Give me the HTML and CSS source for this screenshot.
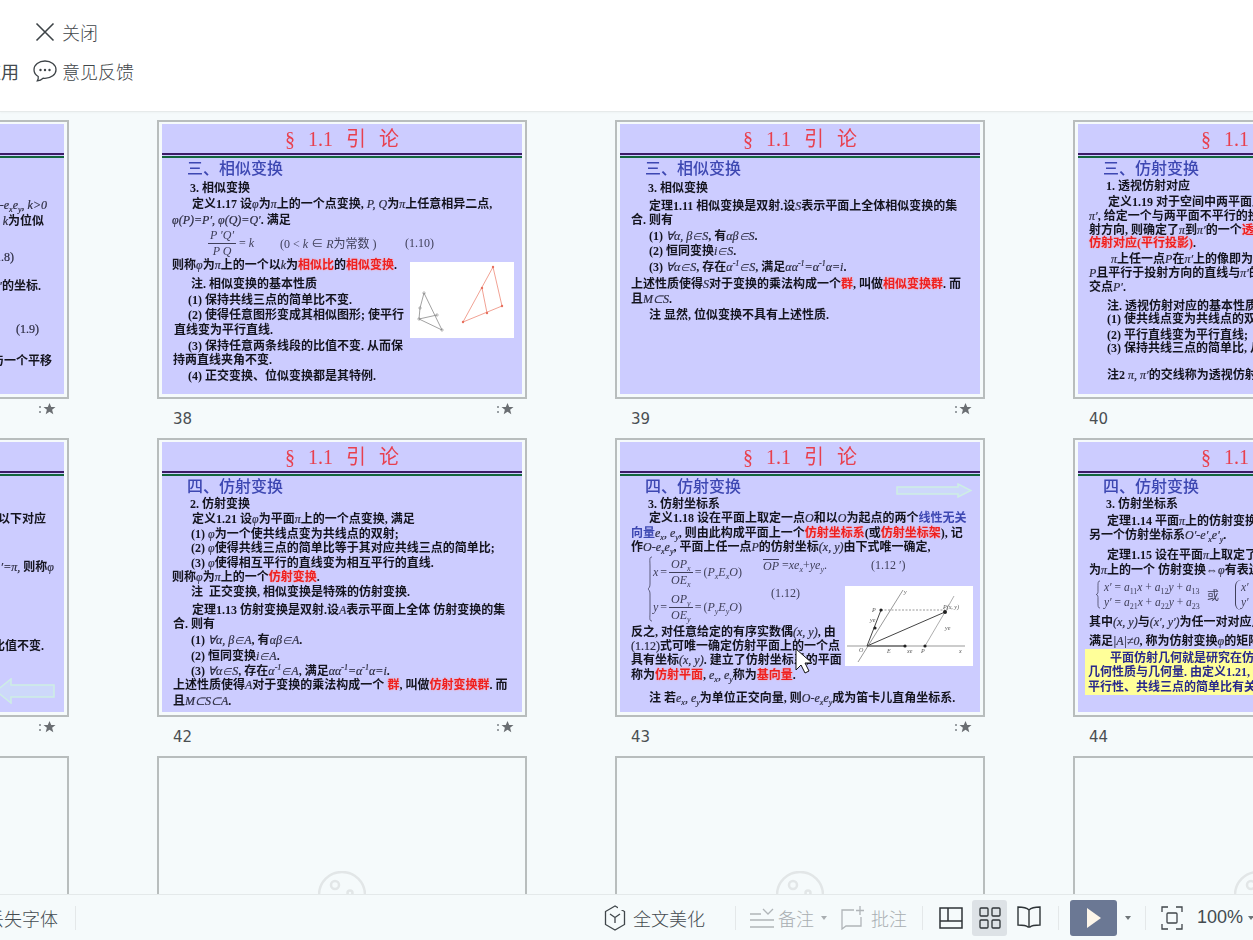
FILE: index.html
```html
<!DOCTYPE html>
<html lang="zh">
<head>
<meta charset="utf-8">
<title>幻灯片浏览</title>
<link rel="stylesheet" href="styles.css">
</head>
<body>
<header class="topbar">
  <div class="toolrow first">
    <span class="cut"></span>
    <svg class="ico-x" viewBox="0 0 20 20"><path d="M1.5 1.5 18.500 18.500M18.500 1.500 1.500 18.500"/></svg>
    <span class="tool-label">关闭</span>
  </div>
  <div class="toolrow second">
    <span class="cut">应用</span>
    <svg class="ico-chat" viewBox="0 0 24 22"><path d="M12 1C5.900 1 1 4.900 1 9.700c0 2.800 1.600 5.200 4.200 6.800.3 1.500-.1 3-.9 4.300 2.300-.2 4.300-1.200 5.800-2.600.6.100 1.300.2 1.900.2 6.100 0 11-3.900 11-8.700S18.100 1 12 1z"/><circle cx="7.500" cy="10" r="1.200"/><circle cx="12" cy="10" r="1.200"/><circle cx="16.500" cy="10" r="1.200"/></svg>
    <span class="tool-label">意见反馈</span>
  </div>
</header>

<main class="sorter">
  <div class="grid">

    <article class="card">
      <div class="frame"><div class="slide">
        <div class="title">§ 1.1 引 论</div><div class="rule"></div>
        <div class="head">三、相似变换</div>
        <div class="line end e17 d38"><i>O-e<sub>x</sub>e<sub>y</sub>, k&gt;0</i></div>
        <div class="line end e20 d16"><i>k</i>为位似</div>
        <div class="line end e50 d36"><span class="n">(1.8)</span></div>
        <div class="line end e23 d29"><i>′</i>的坐标.</div>
        <div class="line end e25 d43"><span class="n">(1.9)</span></div>
        <div class="line end e12 d32">与一个平移</div>
      </div></div>
      <div class="foot"><span class="num">37</span><svg class="star" viewBox="0 0 17 12"><path class="dots" d="M0 3h2v2H0zM0 8h2v2H0z"/><path d="M10.500 0l1.700 4h4.300l-3.400 2.800 1.200 4.400-3.800-2.500-3.800 2.500 1.200-4.400L4.500 4h4.300z"/></svg></div>
    </article>

    <article class="card">
      <div class="frame"><div class="slide">
        <div class="title">§ 1.1 引 论</div><div class="rule"></div>
        <div class="head">三、相似变换</div>
        <div class="line i28 d21">3. 相似变换</div>
        <div class="line i30 d16">定义1.17 设<i>φ</i>为<i>π</i>上的一个点变换, <i>P, Q</i>为<i>π</i>上任意相异二点,</div>
        <div class="line d16"><i>φ(P)=P′, φ(Q)=Q′</i>. 满足</div>
        <div class="formula f38">
          <span class="frac"><span class="over"><i>P ′Q′</i></span><span><i>P Q</i></span></span>
          <span class="eqk">= <i>k</i></span>
          <span class="cond">(0 &lt; <i>k</i> ∈ <i>R</i>为常数 )</span>
          <span class="eqno">(1.10)</span>
        </div>
        <div class="line">则称<i>φ</i>为<i>π</i>上的一个以<i>k</i>为<span class="hl">相似比</span>的<span class="hl">相似变换</span>.</div>
        <div class="line i29 d19">注. 相似变换的基本性质</div>
        <div class="line i26 d16">(1) 保持共线三点的简单比不变.</div>
        <div class="line i26 d15">(2) 使得任意图形变成其相似图形; 使平行</div>
        <div class="line i2 d15">直线变为平行直线.</div>
        <div class="line i26 d16">(3) 保持任意两条线段的比值不变. 从而保</div>
        <div class="line i1 d14">持两直线夹角不变.</div>
        <div class="line i26 d16">(4) 正交变换、位似变换都是其特例.</div>
        <svg class="pic pic38" viewBox="0 0 104 76">
          <g class="gray"><path d="M14 31 32 68 9 57 27 53M14 31 10 46 9 57"/><circle cx="14" cy="31" r="1.200"/><circle cx="10" cy="46" r="1.200"/><circle cx="27" cy="53" r="1.200"/><circle cx="9" cy="57" r="1.200"/><circle cx="32" cy="68" r="1.200"/></g>
          <g class="pink"><path d="M53 60 83 5 92 44ZM72 26 77 51"/><circle cx="83" cy="5" r="1.200"/><circle cx="72" cy="26" r="1.200"/><circle cx="92" cy="44" r="1.200"/><circle cx="77" cy="51" r="1.200"/><circle cx="53" cy="60" r="1.200"/></g>
        </svg>
      </div></div>
      <div class="foot"><span class="num">38</span><svg class="star" viewBox="0 0 17 12"><path class="dots" d="M0 3h2v2H0zM0 8h2v2H0z"/><path d="M10.500 0l1.700 4h4.300l-3.400 2.800 1.200 4.400-3.800-2.500-3.800 2.500 1.200-4.400L4.500 4h4.300z"/></svg></div>
    </article>

    <article class="card">
      <div class="frame"><div class="slide">
        <div class="title">§ 1.1 引 论</div><div class="rule"></div>
        <div class="head">三、相似变换</div>
        <div class="line i28 d21">3. 相似变换</div>
        <div class="line i29 d18">定理1.11 相似变换是双射.设<i>S</i>表示平面上全体相似变换的集</div>
        <div class="line i1 d14">合. 则有</div>
        <div class="line i29 d16">(1) <i>∀α, β∈S</i>, 有<i>αβ∈S</i>.</div>
        <div class="line i29 d15">(2) 恒同变换<i>i∈S</i>.</div>
        <div class="line i29 d16">(3) <i>∀α∈S</i>, 存在<i>α<sup>-1</sup>∈S</i>, 满足<i>αα<sup>-1</sup>=α<sup>-1</sup>α=i</i>.</div>
        <div class="line i1 d17">上述性质使得<i>S</i>对于变换的乘法构成一个<span class="hl">群</span>, 叫做<span class="hl">相似变换群</span>. 而</div>
        <div class="line i1 d15">且<i>M⊂S</i>.</div>
        <div class="line i29 d16">注 显然, 位似变换不具有上述性质.</div>
      </div></div>
      <div class="foot"><span class="num">39</span><svg class="star" viewBox="0 0 17 12"><path class="dots" d="M0 3h2v2H0zM0 8h2v2H0z"/><path d="M10.500 0l1.700 4h4.300l-3.400 2.800 1.200 4.400-3.800-2.500-3.800 2.500 1.200-4.400L4.500 4h4.300z"/></svg></div>
    </article>

    <article class="card">
      <div class="frame"><div class="slide">
        <div class="title">§ 1.1 引 论</div><div class="rule"></div>
        <div class="head">三、仿射变换</div>
        <div class="line i28 d15">1. 透视仿射对应</div>
        <div class="line i30 d16">定义1.19 对于空间中两平面上的点</div>
        <div class="line i1 d14"><i>π′</i>, 给定一个与两平面不平行的投</div>
        <div class="line i1 d14">射方向, 则确定了<i>π</i>到<i>π′</i>的一个<span class="hl">透视</span></div>
        <div class="line i1 d13"><span class="hl">仿射对应(平行投影)</span>.</div>
        <div class="line i33 d16"><i>π</i>上任一点<i>P</i>在<i>π′</i>上的像即为过</div>
        <div class="line i1 d14"><i>P</i>且平行于投射方向的直线与<i>π′</i>的</div>
        <div class="line i1 d14">交点<i>P′</i>.</div>
        <div class="line i29 d19">注. 透视仿射对应的基本性质</div>
        <div class="line i29 d13">(1) 使共线点变为共线点的双射</div>
        <div class="line i29 d16">(2) 平行直线变为平行直线;</div>
        <div class="line i29 d13">(3) 保持共线三点的简单比, 从而</div>
        <div class="line i29 d27">注2 <i>π, π′</i>的交线称为透视仿射</div>
      </div></div>
      <div class="foot"><span class="num">40</span><svg class="star" viewBox="0 0 17 12"><path class="dots" d="M0 3h2v2H0zM0 8h2v2H0z"/><path d="M10.500 0l1.700 4h4.300l-3.400 2.800 1.200 4.400-3.800-2.500-3.800 2.500 1.200-4.400L4.500 4h4.300z"/></svg></div>
    </article>

    <article class="card">
      <div class="frame"><div class="slide">
        <div class="title">§ 1.1 引 论</div><div class="rule"></div>
        <div class="head">四、仿射变换</div>
        <div class="line end e18 d34">以下对应</div>
        <div class="line end e10 d48"><i>′=π,</i> 则称<i>φ</i></div>
        <div class="line end e20 d79">比值不变.</div>
        <svg class="arrow arrow-left" viewBox="0 0 60 26"><path d="M59 7H16V1L1 13l15 12v-6h43z"/></svg>
      </div></div>
      <div class="foot"><span class="num">41</span><svg class="star" viewBox="0 0 17 12"><path class="dots" d="M0 3h2v2H0zM0 8h2v2H0z"/><path d="M10.500 0l1.700 4h4.300l-3.400 2.800 1.200 4.400-3.800-2.500-3.800 2.500 1.200-4.400L4.500 4h4.300z"/></svg></div>
    </article>

    <article class="card">
      <div class="frame"><div class="slide">
        <div class="title">§ 1.1 引 论</div><div class="rule"></div>
        <div class="head">四、仿射变换</div>
        <div class="line i28 d15">2. 仿射变换</div>
        <div class="line i30 d15">定义1.21 设<i>φ</i>为平面<i>π</i>上的一个点变换, 满足</div>
        <div class="line i29 d15">(1) <i>φ</i>为一个使共线点变为共线点的双射;</div>
        <div class="line i29 d14">(2) <i>φ</i>使得共线三点的简单比等于其对应共线三点的简单比;</div>
        <div class="line i29 d15">(3) <i>φ</i>使得相互平行的直线变为相互平行的直线.</div>
        <div class="line d14">则称<i>φ</i>为<i>π</i>上的一个<span class="hl">仿射变换</span>.</div>
        <div class="line i29 d15">注&nbsp; 正交变换, 相似变换是特殊的仿射变换.</div>
        <div class="line i30 d18">定理1.13 仿射变换是双射.设<i>A</i>表示平面上全体 仿射变换的集</div>
        <div class="line i1 d14">合. 则有</div>
        <div class="line i29 d16">(1) <i>∀α, β∈A</i>, 有<i>αβ∈A</i>.</div>
        <div class="line i29 d16">(2) 恒同变换<i>i∈A</i>.</div>
        <div class="line i29 d15">(3) <i>∀α∈S</i>, 存在<i>α<sup>-1</sup>∈A</i>, 满足<i>αα<sup>-1</sup>=α<sup>-1</sup>α=i</i>.</div>
        <div class="line i1 d14">上述性质使得<i>A</i>对于变换的乘法构成一个 <span class="hl">群</span>, 叫做<span class="hl">仿射变换群</span>. 而</div>
        <div class="line i1 d16">且<i>M⊂S⊂A</i>.</div>
      </div></div>
      <div class="foot"><span class="num">42</span><svg class="star" viewBox="0 0 17 12"><path class="dots" d="M0 3h2v2H0zM0 8h2v2H0z"/><path d="M10.500 0l1.700 4h4.300l-3.400 2.800 1.200 4.400-3.800-2.500-3.800 2.500 1.200-4.400L4.500 4h4.300z"/></svg></div>
    </article>

    <article class="card">
      <div class="frame"><div class="slide">
        <div class="title">§ 1.1 引 论</div><div class="rule"></div>
        <div class="head">四、仿射变换</div>
        <div class="line i28 d15">3. 仿射坐标系</div>
        <div class="line i29 d14">定义1.18 设在平面上取定一点<i>O</i>和以<i>O</i>为起点的两个<span class="bl">线性无关</span></div>
        <div class="line i1 d15"><span class="bl">向量</span><i>e<sub>x</sub>, e<sub>y</sub></i>, 则由此构成平面上一个<span class="hl">仿射坐标系</span>(或<span class="hl">仿射坐标架</span>), 记</div>
        <div class="line i1 d14">作<i>O-e<sub>x</sub>e<sub>y</sub></i>, 平面上任一点<i>P</i>的仿射坐标<i>(x, y)</i>由下式唯一确定,</div>
        <div class="eqblock">
          <svg class="brace" viewBox="0 0 6 66"><path d="M5 1C2 1 3 4 3 10v18c0 3-1 4-2 5 1 1 2 2 2 5v18c0 6-1 9 2 9"/></svg>
          <div class="eqs">
            <div class="eq"><i>x</i> = <span class="frac"><span class="over"><i>OP<sub>x</sub></i></span><span><i>OE<sub>x</sub></i></span></span> = <span>(<i>P<sub>x</sub>E<sub>x</sub>O</i>)</span></div>
            <div class="eq"><i>y</i> = <span class="frac"><span class="over"><i>OP<sub>y</sub></i></span><span><i>OE<sub>y</sub></i></span></span> = <span>(<i>P<sub>y</sub>E<sub>y</sub>O</i>)</span></div>
          </div>
          <div class="eqside">
            <div class="eqtop"><span class="vec"><i>OP</i></span>&nbsp;= <i>xe<sub>x</sub></i> + <i>ye<sub>y</sub></i> .<span class="eqno2">(1.12 ′)</span></div>
            <div class="eqmid">(1.12)</div>
          </div>
        </div>
        <div class="line i1">反之, 对任意给定的有序实数偶<i>(x, y)</i>, 由</div>
        <div class="line i1 d14"><span class="n">(1.12)</span>式可唯一确定仿射平面上的一个点</div>
        <div class="line i1 d14">具有坐标<i>(x, y)</i>. 建立了仿射坐标系的平面</div>
        <div class="line i1 d15">称为<span class="hl">仿射平面</span>, <i>e<sub>x</sub>, e<sub>y</sub></i>称为<span class="hl">基向量</span>.</div>
        <div class="line i29 d23">注 若<i>e<sub>x</sub>, e<sub>y</sub></i>为单位正交向量, 则<i>O-e<sub>x</sub>e<sub>y</sub></i>成为笛卡儿直角坐标系.</div>
        <svg class="arrow arrow-right" viewBox="0 0 76 15"><path d="M1 4h61V1l13 6.500L62 14v-3H1z"/></svg>
        <svg class="pic pic43" viewBox="0 0 128 80">
          <g class="axis"><path d="M13 76 58 4M2 60H120"/></g>
          <path class="thin" d="M80 60 100 26 M109 10 100 26"/>
          <path class="dash" d="M36 24H100"/>
          <path class="vecl" d="M22 60 100 26M22 60 36 24M22 60H60"/>
          <circle cx="100" cy="26" r="2"/><circle cx="36" cy="24" r="1.600"/><circle cx="80" cy="60" r="1.600"/><circle cx="60" cy="60" r="1.600"/><circle cx="30" cy="42" r="1.600"/>
          <text x="98" y="23">P(x, y)</text><text x="27" y="26">P</text><text x="59" y="8">y</text><text x="114" y="67">x</text><text x="14" y="66">O</text><text x="42" y="67">E</text><text x="76" y="67">P</text><text x="100" y="44">ye</text><text x="62" y="67">xe</text><text x="25" y="36">ye</text>
        </svg>
        <svg class="cursor" viewBox="0 0 19 26"><path d="M1 1v21l5-5 4 8 4-2-4-8h7z"/></svg>
      </div></div>
      <div class="foot"><span class="num">43</span><svg class="star" viewBox="0 0 17 12"><path class="dots" d="M0 3h2v2H0zM0 8h2v2H0z"/><path d="M10.500 0l1.700 4h4.300l-3.400 2.800 1.200 4.400-3.800-2.500-3.800 2.500 1.200-4.400L4.500 4h4.300z"/></svg></div>
    </article>

    <article class="card">
      <div class="frame"><div class="slide">
        <div class="title">§ 1.1 引 论</div><div class="rule"></div>
        <div class="head">四、仿射变换</div>
        <div class="line i28 d16">3. 仿射坐标系</div>
        <div class="line i29 d17">定理1.14 平面<i>π</i>上的仿射变换</div>
        <div class="line i1 d14">另一个仿射坐标系<i>O′-e′<sub>x</sub>e′<sub>y</sub></i>.</div>
        <div class="line i29 d20">定理1.15 设在平面<i>π</i>上取定了</div>
        <div class="line i1 d15">为<i>π</i>上的一个 仿射变换⇔<i>φ</i>有表达</div>
        <div class="matrix">
          <svg class="brace brace-s" viewBox="0 0 6 30"><path d="M5 1C3 1 3 3 3 6v6c0 2-1 3-2 3 1 0 2 1 2 3v6c0 3 0 5 2 5"/></svg>
          <div class="meqs">
            <div><i>x′</i> = <i>a</i><sub>11</sub><i>x</i> + <i>a</i><sub>12</sub><i>y</i> + <i>a</i><sub>13</sub></div>
            <div><i>y′</i> = <i>a</i><sub>21</sub><i>x</i> + <i>a</i><sub>22</sub><i>y</i> + <i>a</i><sub>23</sub></div>
          </div>
          <span class="huo">或</span>
          <div class="meqs paren"><div><i>x′</i></div><div><i>y′</i></div></div>
        </div>
        <div class="line i1 m4">其中<i>(x, y)</i>与<i>(x′, y′)</i>为任一对对应点</div>
        <div class="line i1 d19">满足<i>|A|≠0</i>, 称为仿射变换<i>φ</i>的矩阵</div>
        <div class="note">
          <div class="line i26">平面仿射几何就是研究在仿射</div>
          <div class="line d14">几何性质与几何量. 由定义1.21, 可</div>
          <div class="line d15">平行性、共线三点的简单比有关</div>
        </div>
      </div></div>
      <div class="foot"><span class="num">44</span><svg class="star" viewBox="0 0 17 12"><path class="dots" d="M0 3h2v2H0zM0 8h2v2H0z"/><path d="M10.500 0l1.700 4h4.300l-3.400 2.800 1.200 4.400-3.800-2.500-3.800 2.500 1.200-4.400L4.500 4h4.300z"/></svg></div>
    </article>

    <article class="card"><div class="frame blank"><svg class="face" viewBox="0 0 48 48"><circle cx="24" cy="24" r="23"/><circle cx="17" cy="14" r="4"/><circle cx="32" cy="22" r="2.500"/></svg></div></article>
    <article class="card"><div class="frame blank"><svg class="face" viewBox="0 0 48 48"><circle cx="24" cy="24" r="23"/><circle cx="17" cy="14" r="4"/><circle cx="32" cy="22" r="2.500"/></svg></div></article>
    <article class="card"><div class="frame blank"><svg class="face" viewBox="0 0 48 48"><circle cx="24" cy="24" r="23"/><circle cx="17" cy="14" r="4"/><circle cx="32" cy="22" r="2.500"/></svg></div></article>
    <article class="card"><div class="frame blank"><svg class="face" viewBox="0 0 48 48"><circle cx="24" cy="24" r="23"/><circle cx="17" cy="14" r="4"/><circle cx="32" cy="22" r="2.500"/></svg></div></article>
  </div>
</main>

<footer class="statusbar">
  <span class="missing">丢失字体</span>
  <span class="sep sep-a"></span>
  <svg class="b-ico hex" viewBox="0 0 22 26"><path d="M11 1 1.500 6.500v13L11 25l9.500-5.500v-13zM6 9l5 3.500L16 9M11 12.500V18"/><path class="mask" d="M14 0h8v5h-8z"/></svg>
  <span class="b-text beautify">全文美化</span>
  <span class="sep sep-b"></span>
  <svg class="b-ico notes" viewBox="0 0 24 20"><path d="M0 6h11M0 12h24M0 19h24M13 1l5 5 5-5"/></svg>
  <span class="b-text off t-note">备注</span>
  <span class="caret off-caret"></span>
  <svg class="b-ico addc" viewBox="0 0 24 24"><path d="M13 4H1v19l4-3h15v-9M19 0v9M15 4.500h8"/></svg>
  <span class="b-text off t-com">批注</span>
  <span class="sep sep-c"></span>
  <svg class="b-ico view1" viewBox="0 0 24 22"><path d="M1 1h22v20H1zM9 1v13M1 14h22"/></svg>
  <span class="gridbtn"><svg viewBox="0 0 22 22"><rect x="1" y="1" width="8" height="8" rx="1"/><rect x="13" y="1" width="8" height="8" rx="1"/><rect x="1" y="13" width="8" height="8" rx="1"/><rect x="13" y="13" width="8" height="8" rx="1"/></svg></span>
  <svg class="b-ico book" viewBox="0 0 24 24"><path d="M12 4C10 2 5 1 1 1v18c4 0 8 0 10 2h2c2-2 6-2 10-2V1c-4 0-9 1-11 3zM12 4v17"/></svg>
  <span class="sep sep-d"></span>
  <span class="play"><svg viewBox="0 0 16 22"><path d="M1 1v20l14-10z"/></svg></span>
  <span class="caret play-caret"></span>
  <span class="sep sep-e"></span>
  <svg class="b-ico fit" viewBox="0 0 22 24"><path d="M7 1H1v5M15 1h6v5M7 23H1v-5M15 23h6v-5"/><rect x="6" y="7" width="10" height="10" rx="1"/></svg>
  <span class="b-text zoom">100%</span>
  <span class="caret zoom-caret"></span>
</footer>
</body>
</html>
```
FILE: styles.css
```css
* { box-sizing: border-box; }
html, body { margin: 0; height: 100%; }
body {
  width: 1253px;
  height: 940px;
  display: flex;
  flex-direction: column;
  overflow: hidden;
  background: #f5fafb;
  font-family: "Noto Sans CJK SC", "Liberation Sans", sans-serif;
  color: #444b50;
}

/* top bar */
.topbar {
  flex: 0 0 112px;
  background: #fff;
  border-bottom: 1px solid #e6eaea;
  box-shadow: 0 1px 2px rgba(0, 0, 0, .03);
  padding-top: 21px;
  position: relative;
  z-index: 2;
}
.toolrow { display: flex; align-items: center; height: 22px; }
.second { margin-top: 17px; }
.cut {
  width: 19px;
  margin-left: -18px;
  margin-right: 32px;
  flex: none;
  font-size: 18px;
  white-space: nowrap;
  display: flex;
  justify-content: flex-end;
}
.second .cut { width: 37px; margin-left: -18px; margin-right: 14px; }
.ico-x { width: 20px; height: 20px; fill: none; stroke: #3d4347; stroke-width: 1.600; }
.first .ico-x { margin-right: 7px; margin-left: 2px; flex: none; }
.ico-chat { width: 24px; height: 22px; margin-right: 5px; fill: none; stroke: #3d4347; stroke-width: 1.300; flex: none; }
.ico-chat circle { fill: #3d4347; stroke: none; }
.tool-label { font-size: 18px; line-height: 22px; font-weight: 300; color: #3f464a; white-space: nowrap; }

/* sorter */
.sorter { flex: 1 1 auto; min-height: 0; overflow: hidden; padding-top: 8px; }
.grid {
  display: grid;
  grid-template-columns: repeat(4, 370px);
  grid-auto-rows: 318px;
  column-gap: 88px;
  margin-left: -301px;
  width: 1744px;
}
.card { display: flex; flex-direction: column; }
.frame {
  width: 370px;
  height: 279px;
  border: 2px solid #b8bdbd;
  padding: 2px 3px 3px;
  flex: none;
}
.foot { height: 39px; display: flex; justify-content: space-between; align-items: flex-start; padding: 4px 13px 0 16px; }
.num { font-family: "DejaVu Sans", sans-serif; font-size: 15px; line-height: 18px; margin-top: 7px; color: #4a4f52; }
.star { width: 17px; height: 12px; fill: #6a6e72; }
.star .dots { fill: #9aa0a4; }
.blank { display: flex; align-items: center; justify-content: center; }
.face { width: 48px; height: 48px; fill: none; stroke: #e2e6e7; stroke-width: 2.500; }

/* slide */
.slide {
  width: 360px;
  height: 270px;
  background: #ccccff;
  padding-left: 10px;
  position: relative;
  overflow: hidden;
  filter: blur(.35px);
}
.title {
  margin-left: -10px;
  height: 29px;
  text-align: center;
  font-family: "Liberation Serif", "Noto Sans CJK SC", serif;
  font-size: 20px;
  line-height: 30px;
  color: #e8404e;
  word-spacing: 8px;
}
.rule {
  margin-left: -10px;
  height: 5px;
  border-top: 2px solid #3c1c66;
  border-bottom: 2px solid #14663c;
}
.head {
  margin: 2px 0 4px 15px;
  height: 15px;
  line-height: 15px;
  font-size: 16px;
  font-weight: 500;
  color: #3d47b2;
  white-space: nowrap;
}
.line {
  height: 15px;
  line-height: 15px;
  font-family: "Liberation Serif", "Noto Sans CJK SC", serif;
  font-size: 12px;
  font-weight: 700;
  color: #14141e;
  white-space: nowrap;
}
.line i, .n { font-weight: 400; font-family: "Liberation Serif", serif; color: #2c2c40; -webkit-text-stroke: .2px #2c2c40; }
sub, sup { font-size: 8px; line-height: 0; }
.hl { color: #ee2020; text-shadow: 0 0 2px #ff9c9c; }
.bl { color: #3d47b2; }

/* indentation */
.i1 { padding-left: 1px; }
.i2 { padding-left: 2px; }
.i26 { padding-left: 16px; }
.i28 { padding-left: 18px; }
.i29 { padding-left: 19px; }
.i30 { padding-left: 20px; }
.i33 { padding-left: 23px; }
.note .i26 { padding-left: 22px; }
.end { text-align: right; }
.e10 { padding-right: 10px; }
.e12 { padding-right: 12px; }
.e17 { padding-right: 17px; }
.e18 { padding-right: 18px; }
.e20 { padding-right: 20px; }
.e23 { padding-right: 23px; }
.e25 { padding-right: 25px; }
.e50 { padding-right: 50px; }

/* line spacing, named by distance between line centres */
.d13 { margin-top: -2px; }
.d14 { margin-top: -1px; }
.d15 { margin-top: 0; }
.d16 { margin-top: 1px; }
.d17 { margin-top: 2px; }
.d18 { margin-top: 3px; }
.d19 { margin-top: 4px; }
.d20 { margin-top: 5px; }
.d21 { margin-top: 6px; }
.d23 { margin-top: 8px; }
.d27 { margin-top: 12px; }
.d29 { margin-top: 14px; }
.d32 { margin-top: 17px; }
.d34 { margin-top: 19px; }
.d36 { margin-top: 21px; }
.d38 { margin-top: 23px; }
.d43 { margin-top: 28px; }
.d48 { margin-top: 33px; }
.d79 { margin-top: 64px; }
.m4 { margin-top: 4px; }

/* formulas */
.formula, .eq, .eqtop, .meqs, .eqmid, .huo {
  font-family: "Liberation Serif", "Noto Sans CJK SC", serif;
  font-size: 12px;
  font-weight: 400;
  color: #40405a;
  white-space: nowrap;
}
.formula { height: 30px; display: flex; align-items: center; padding-left: 36px; }
.frac { display: inline-flex; flex-direction: column; align-items: center; vertical-align: middle; line-height: 15px; }
.over { border-bottom: 1px solid #40405a; padding: 0 2px; }
.eqk { margin-left: 3px; width: 41px; flex: none; }
.cond { width: 125px; flex: none; }
.eqno { flex: none; }

.eqblock { height: 70px; display: flex; padding-left: 17px; }
.brace { width: 6px; height: 66px; margin-top: 1px; fill: none; stroke: #40405a; stroke-width: .8; flex: none; }
.eqs { width: 110px; flex: none; }
.eq { height: 35px; display: flex; align-items: center; gap: 2px; }
.eqside { flex: none; }
.eqtop { height: 16px; line-height: 16px; margin-top: 2px; display: flex; align-items: center; }
.vec { border-top: 1px solid #40405a; line-height: 12px; }
.eqno2 { margin-left: 44px; }
.eqmid { margin: 13px 0 0 8px; line-height: 14px; }

.matrix { height: 33px; display: flex; align-items: center; padding-left: 7px; }
.brace-s { height: 29px; margin: 0; }
.meqs { line-height: 15px; font-size: 11.500px; padding-left: 3px; width: 106px; flex: none; }
.huo { width: 28px; flex: none; }
.paren { width: 20px; border-left: 1px solid #40405a; border-radius: 6px 0 0 6px; padding-left: 5px; }

.note {
  margin: -.500px 0 0 -3px;
  padding: 2.500px 0 0 3px;
  width: 340px;
  height: 46px;
  background: #ffff99;
}
.note .line { color: #28288c; }

/* pictures and overlays */
.pic { position: absolute; background: #fff; }
.pic38 { left: 248px; top: 138px; width: 104px; height: 76px; }
.pic38 path { fill: none; stroke-width: .8; }
.pic38 .gray path { stroke: #8a8a8a; }
.pic38 .gray circle { fill: none; stroke: #777; stroke-width: .5; }
.pic38 .pink path { stroke: #ee8a78; }
.pic38 .pink circle { fill: #e8705e; }
.pic43 { left: 225px; top: 144px; width: 128px; height: 80px; }
.pic43 .axis path { fill: none; stroke: #999; stroke-width: 1; }
.pic43 .thin { fill: none; stroke: #999; stroke-width: .8; }
.pic43 .dash { fill: none; stroke: #555; stroke-width: .6; stroke-dasharray: 2 1.500; }
.pic43 .vecl { fill: none; stroke: #444; stroke-width: 1; }
.pic43 circle { fill: #222; }
.pic43 text { font-family: "Liberation Serif", serif; font-style: italic; font-size: 6px; fill: #555; }
.arrow { position: absolute; fill: #cdd8fa; stroke: #cdeee4; stroke-width: 1.500; }
.arrow-right { left: 276px; top: 41px; width: 76px; height: 15px; }
.arrow-left { right: 9px; top: 236px; width: 60px; height: 26px; }
.cursor { position: absolute; left: 175px; top: 206px; width: 19px; height: 26px; fill: #fff; stroke: #111; stroke-width: 1; }

/* status bar */
.statusbar {
  flex: 0 0 46px;
  background: #f5fafb;
  border-top: 1px solid #e4e9ea;
  position: relative;
  z-index: 2;
  display: flex;
  align-items: center;
  white-space: nowrap;
}
.missing { font-size: 18px; font-weight: 300; margin-left: -14px; width: 72px; flex: none; color: #444b50; }
.sep { width: 1px; height: 24px; background: #e4e8e9; flex: none; }
.sep-a { margin-left: 17px; }
.b-ico { flex: none; fill: none; stroke: #3f464a; stroke-width: 1.300; }
.hex { width: 22px; height: 26px; margin-left: 528px; }
.hex .mask { fill: #f5fafb; stroke: none; }
.b-text { font-size: 18px; font-weight: 300; flex: none; color: #444b50; }
.beautify { margin-left: 7px; width: 72px; }
.sep-b { margin-left: 30px; }
.notes { width: 24px; height: 20px; margin-left: 14px; stroke: #b0b5b8; }
.off { color: #a9aeb1; }
.t-note { margin-left: 4px; width: 36px; }
.caret { width: 0; height: 0; border-left: 3.500px solid transparent; border-right: 3.500px solid transparent; border-top: 4px solid #6f7578; flex: none; }
.off-caret { margin-left: 7px; border-top-color: #a9aeb1; }
.addc { width: 24px; height: 24px; margin-left: 14px; stroke: #b0b5b8; }
.t-com { margin-left: 6px; width: 36px; }
.sep-c { margin-left: 15px; }
.view1 { width: 24px; height: 22px; margin-left: 16px; stroke-width: 1.500; stroke: #2f3538; }
.gridbtn { width: 35px; height: 36px; margin-left: 9px; background: #dde2e6; border-radius: 3px; display: flex; align-items: center; justify-content: center; flex: none; }
.gridbtn svg { width: 22px; height: 22px; fill: none; stroke: #2f3538; stroke-width: 1.300; }
.book { width: 24px; height: 24px; margin-left: 10px; stroke-width: 1.400; stroke: #2f3538; }
.sep-d { margin-left: 17px; }
.play { width: 47px; height: 36px; margin-left: 11px; background: #6b7894; border-radius: 3px; display: flex; align-items: center; justify-content: center; flex: none; }
.play svg { width: 16px; height: 22px; fill: #fdf6ea; }
.play-caret { margin-left: 8px; }
.sep-e { margin-left: 14px; }
.fit { width: 22px; height: 24px; margin-left: 15px; }
.zoom { margin-left: 14px; width: 48px; font-family: "Liberation Sans", sans-serif; font-weight: 400; font-size: 18px; }
.zoom-caret { margin-left: 3px; }
```
